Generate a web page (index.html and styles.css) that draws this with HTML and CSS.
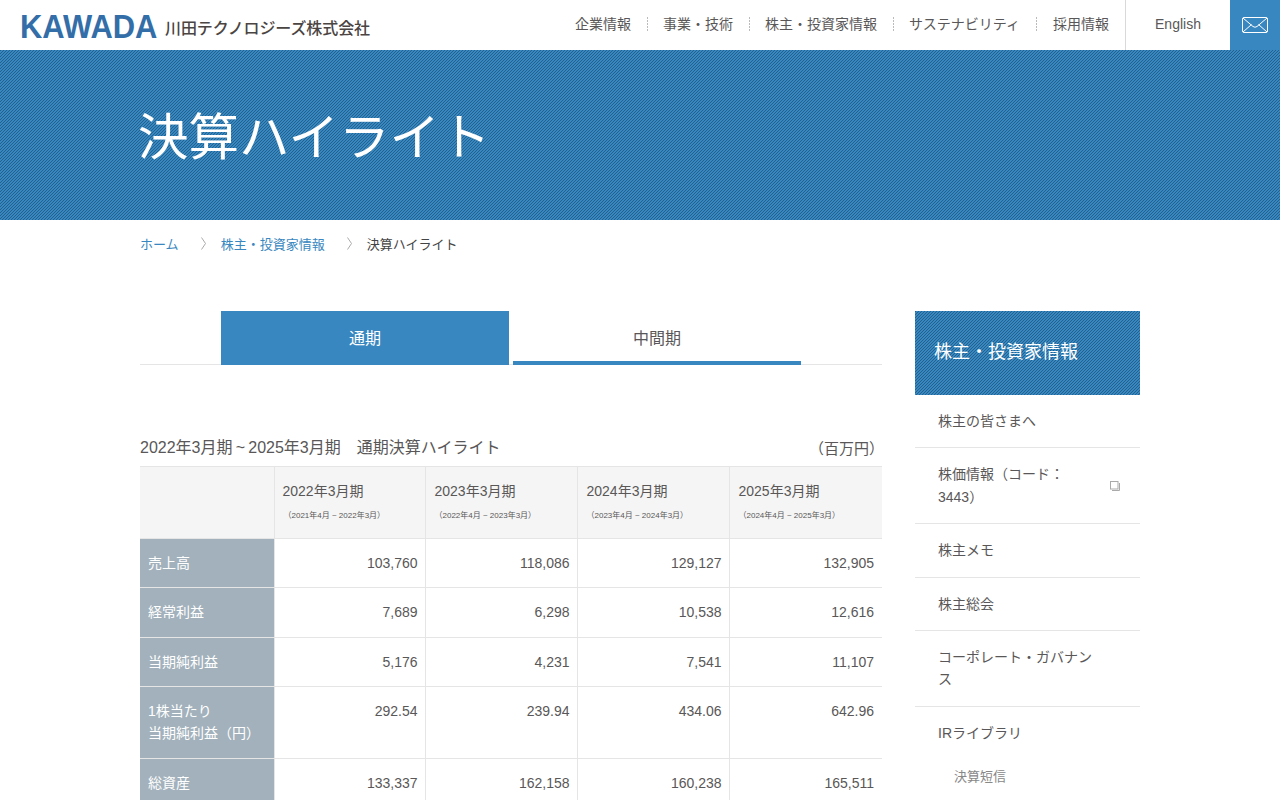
FILE: index.html
```html
<!DOCTYPE html>
<html lang="ja">
<head>
<meta charset="utf-8">
<title>決算ハイライト</title>
<link rel="stylesheet" href="styles.css">
</head>
<body>
<header class="site-header">
  <a class="logo">
    <span class="logo-mark"><span class="logo-text">KAWADA</span></span>
    <span class="logo-name">川田テクノロジーズ株式会社</span>
  </a>
  <nav class="gnav">
    <a>企業情報</a><a>事業・技術</a><a>株主・投資家情報</a><a>サステナビリティ</a><a>採用情報</a>
  </nav>
  <a class="lang">English</a>
  <a class="mail">
    <svg width="26" height="16" viewBox="0 0 26 16" fill="none" stroke="#fff" stroke-width="1"><rect x="0.500" y="0.500" width="25" height="15" rx="1.500"/><path d="M1 1l10 8.500q2 1.500 4 0L25 1M1 15l8.500-7.500M25 15l-8.500-7.500"/></svg>
  </a>
</header>
<section class="hero"><h1>決算ハイライト</h1></section>
<ol class="crumbs">
  <li><a>ホーム</a></li>
  <li class="chev"><svg width="5" height="13" viewBox="0 0 5 13" fill="none" stroke="#aaa"><path d="M.5.500L4.500 6.500 .5 12.500"/></svg></li>
  <li><a>株主・投資家情報</a></li>
  <li class="chev"><svg width="5" height="13" viewBox="0 0 5 13" fill="none" stroke="#aaa"><path d="M.5.500L4.500 6.500 .5 12.500"/></svg></li>
  <li>決算ハイライト</li>
</ol>
<div class="wrap">
  <main class="main">
    <div class="tabs">
      <a class="tab active">通期</a>
      <a class="tab">中間期</a>
    </div>
    <div class="caption"><h2>2022年3月期&#8201;~&#8201;2025年3月期　通期決算ハイライト</h2><span>（百万円）</span></div>
    <table class="data">
      <colgroup><col class="c1"><col class="c2"><col class="c3"><col class="c3"><col class="c5"></colgroup>
      <thead>
        <tr class="r-head">
          <th class="blank"></th>
          <th>2022年3月期<small>（2021年4月 ~ 2022年3月）</small></th>
          <th>2023年3月期<small>（2022年4月 ~ 2023年3月）</small></th>
          <th>2024年3月期<small>（2023年4月 ~ 2024年3月）</small></th>
          <th>2025年3月期<small>（2024年4月 ~ 2025年3月）</small></th>
        </tr>
      </thead>
      <tbody>
        <tr class="r1"><th>売上高</th><td>103,760</td><td>118,086</td><td>129,127</td><td>132,905</td></tr>
        <tr class="r2"><th>経常利益</th><td>7,689</td><td>6,298</td><td>10,538</td><td>12,616</td></tr>
        <tr class="r1"><th>当期純利益</th><td>5,176</td><td>4,231</td><td>7,541</td><td>11,107</td></tr>
        <tr class="r3"><th>1株当たり<br>当期純利益（円）</th><td>292.54</td><td>239.94</td><td>434.06</td><td>642.96</td></tr>
        <tr class="r2"><th>総資産</th><td>133,337</td><td>162,158</td><td>160,238</td><td>165,511</td></tr>
      </tbody>
    </table>
  </main>
  <aside class="side">
    <div class="side-head">株主・投資家情報</div>
    <ul class="side-list">
      <li><a>株主の皆さまへ</a></li>
      <li class="ext"><a>株価情報（コード：3443）</a>
        <svg class="ext-icon" width="10" height="10" viewBox="0 0 10 10" fill="none" stroke="#aaa"><path d="M2 9.500H9.500V2"/><rect x="0.500" y="0.500" width="7.500" height="7.500"/></svg>
      </li>
      <li><a>株主メモ</a></li>
      <li><a>株主総会</a></li>
      <li><a>コーポレート・ガバナンス</a></li>
      <li class="open"><a>IRライブラリ</a>
        <ul class="sub"><li>決算短信</li></ul>
      </li>
    </ul>
  </aside>
</div>
</body>
</html>
```
FILE: styles.css
```css
* { box-sizing: border-box; }
html { height: 800px; overflow: hidden; }
body {
  margin: 0;
  font-family: "Liberation Sans", "Noto Sans CJK JP", sans-serif;
  font-size: 14px;
  color: #595757;
  background: #fff;
}
a { color: inherit; text-decoration: none; }
ul, ol { list-style: none; margin: 0; padding: 0; }
h1, h2 { margin: 0; font-weight: normal; }

.site-header { display: flex; align-items: center; height: 50px; background: #fff; }
.logo { display: flex; align-items: flex-start; margin-left: 20px; height: 50px; }
.logo-mark { display: block; width: 138px; margin-top: 10px; height: 32px; }
.logo-text {
  display: inline-block;
  font-weight: 700;
  font-size: 34px;
  line-height: 32px;
  color: #336ea8;
  white-space: nowrap;
  transform: scaleX(.909);
  transform-origin: left center;
}
.logo-name {
  margin: 20px 0 0 7px;
  font-size: 16px;
  line-height: 18px;
  letter-spacing: -.1px;
  font-weight: 500;
  color: #4a4442;
  white-space: nowrap;
}
.gnav { display: flex; margin-left: auto; padding-bottom: 2px; }
.gnav a { padding: 0 17px 0 15px; line-height: 14px; background: radial-gradient(circle, #777 .6px, transparent .7px) right center / 1px 3px repeat-y; }
.gnav a:last-child { padding: 0 16px; background: none; }
.lang {
  width: 105px;
  height: 50px;
  line-height: 48px;
  text-align: center;
  border-left: 1px solid #d9d9d9;
}
.mail { display: flex; align-items: center; justify-content: center; width: 50px; height: 50px; background: #3887c0; }

.hero, .side-head {
  background-color: #3887c0;
  background-image: linear-gradient(135deg, #22618c 0 25%, #3887c0 25% 58%, #22618c 58% 75%, #3887c0 75% 100%);
  background-size: 3px 3px;
  color: #fff;
}
.hero { height: 170px; padding: 56px 140px 0; }
.hero h1 { margin-left: -2px; font-size: 50.5px; line-height: 64px; font-weight: 400; }

.crumbs { display: flex; align-items: center; padding: 0 140px 4px; height: 50px; font-size: 13px; color: #444; }
.crumbs a { color: #3887c0; }
.chev { display: flex; margin: 0 15px 0 22px; }

.wrap { display: flex; justify-content: space-between; padding: 41px 140px 0; }
.main { width: 742px; }
.side { width: 225px; }

.tabs { display: flex; justify-content: center; gap: 4px; height: 54px; border-bottom: 1px solid #e5e5e5; }
.tab { width: 288px; height: 54px; line-height: 56px; text-align: center; font-size: 16px; border-bottom: 4px solid #3887c0; }
.tab.active { background: #3887c0; color: #fff; }

.caption { display: flex; justify-content: space-between; align-items: center; margin-top: 71px; height: 24px; }
.caption h2 { font-size: 16px; line-height: 24px; }
.caption span { font-size: 15px; margin: 0 -2px 2px 0; }

.data { width: 742px; margin-top: 6px; border-collapse: collapse; table-layout: fixed; }
.c1 { width: 134px; }
.c2 { width: 151px; }
.c3 { width: 152px; }
.c5 { width: 153px; }
.data th, .data td { border: 1px solid #e5e5e5; vertical-align: top; font-weight: normal; }
.data tr > :first-child { border-left: 0; }
.data tr > :last-child { border-right: 0; padding-right: 8px; }
.r-head th { background: #f5f5f5; height: 72px; padding: 14px 8px 0; text-align: left; line-height: 20px; }
.r-head th:nth-child(n+3) { padding-left: 9px; }
.r-head small { display: block; margin: 9px 0 0 1px; font-size: 8px; line-height: 12px; }
.r-head th:nth-child(n+3) small { margin-left: 0; }
tbody th { background: #a2b1bb; color: #fff; text-align: left; padding: 13px 8px; line-height: 22px; border-color: #e5e5e5; }
tbody td { text-align: right; padding: 13px 7px 13px 8px; line-height: 22px; }
.r1 > * { height: 49px; }
.r2 > * { height: 50px; }
.r3 > * { height: 72px; }

.side-head { height: 84px; padding-left: 19px; line-height: 82px; font-size: 18px; }
.side-list > li { position: relative; padding: 15px 48px 15px 23px; line-height: 1.6; border-bottom: 1px solid #e5e5e5; }
.side-list > li.open { border-bottom: 0; padding-bottom: 0; }
.ext-icon { position: absolute; right: 20px; top: 33px; }
.sub { margin-top: 23px; padding-left: 16px; font-size: 13px; color: #888; }
```
